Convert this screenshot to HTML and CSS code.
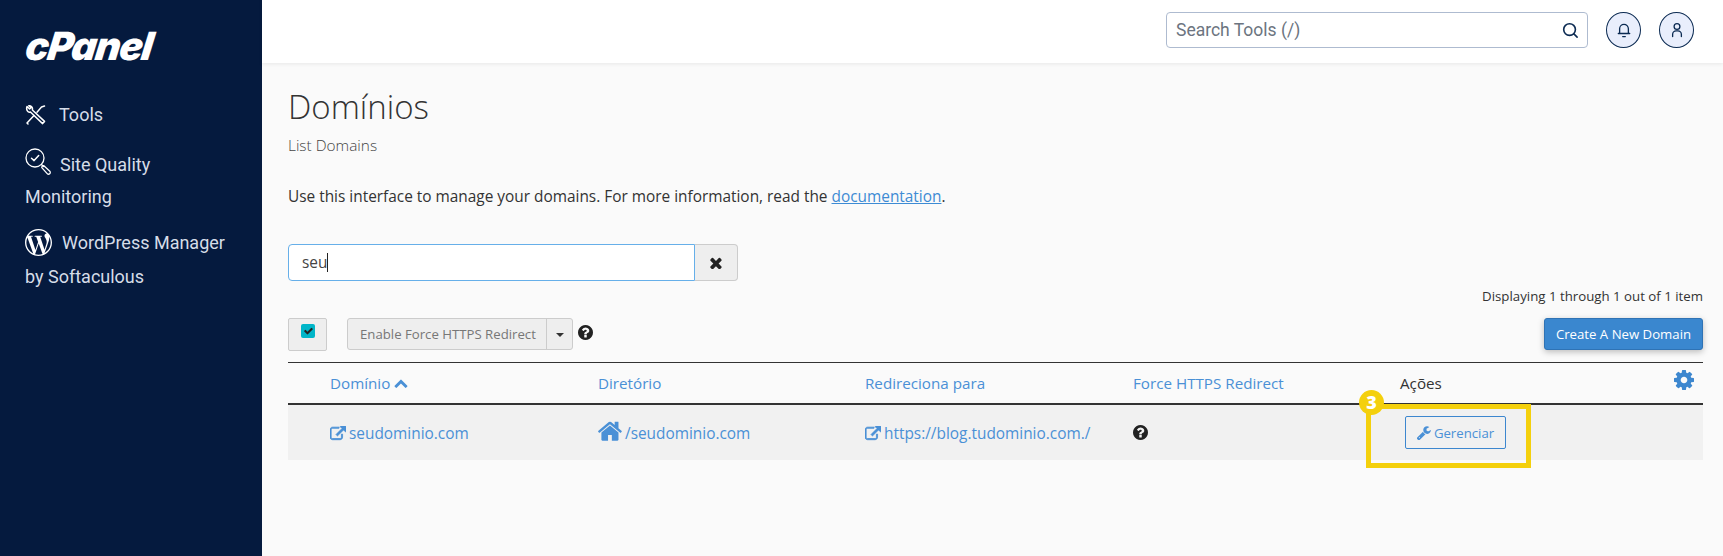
FILE: index.html
```html
<!DOCTYPE html>
<html lang="pt">
<head>
<meta charset="utf-8">
<title>Domínios</title>
<link rel="stylesheet" href="styles.css">
</head>
<body>
<svg class="defs" width="0" height="0" aria-hidden="true">
  <symbol id="i-q" viewBox="128 128 1536 1536"><path d="M1024 1376v-192q0-14-9-23t-23-9h-192q-14 0-23 9t-9 23v192q0 14 9 23t23 9h192q14 0 23-9t9-23zm256-672q0-88-55.5-163t-138.5-116-170-41q-243 0-371 213-15 24 8 42l132 100q7 6 19 6 16 0 25-12 53-68 86-92 34-24 86-24 48 0 85.5 26t37.5 59q0 38-20 61t-68 45q-63 28-115.5 86.5t-52.5 125.5v36q0 14 9 23t23 9h192q14 0 23-9t9-23q0-19 21.5-49.5t54.5-49.5q32-18 49-28.5t46-35 44.5-48 28-60.5 12.5-81zm384 192q0 209-103 385.5t-279.5 279.5-385.5 103-385.5-103-279.5-279.5-103-385.5 103-385.5 279.5-279.5 385.5-103 385.5 103 279.5 279.5 103 385.5z"/></symbol>
  <symbol id="i-x" viewBox="280 280 1240 1240"><path d="M1490 1322q0 40-28 68l-136 136q-28 28-68 28t-68-28l-294-294-294 294q-28 28-68 28t-68-28l-136-136q-28-28-28-68t28-68l294-294-294-294q-28-28-28-68t28-68l136-136q28-28 68-28t68 28l294 294 294-294q28-28 68-28t68 28l136 136q28 28 28 68t-28 68l-294 294 294 294q28 28 28 68z"/></symbol>
  <symbol id="i-ext" viewBox="0 0 1792 1792"><path d="M1408 928v320q0 119-84.5 203.5t-203.5 84.5h-832q-119 0-203.5-84.5t-84.5-203.5v-832q0-119 84.5-203.5t203.5-84.5h704q14 0 23 9t9 23v64q0 14-9 23t-23 9h-704q-66 0-113 47t-47 113v832q0 66 47 113t113 47h832q66 0 113-47t47-113v-320q0-14 9-23t23-9h64q14 0 23 9t9 23zm384-864v512q0 26-19 45t-45 19-45-19l-176-176-652 652q-10 10-23 10t-23-10l-114-114q-10-10-10-23t10-23l652-652-176-176q-19-19-19-45t19-45 45-19h512q26 0 45 19t19 45z"/></symbol>
  <symbol id="i-home" viewBox="90 230 1620 1310"><path d="M1472 992v480q0 26-19 45t-45 19h-384v-384h-256v384h-384q-26 0-45-19t-19-45v-480q0-1 .5-3t.5-3l575-474 575 474q1 2 1 6zm223-69l-62 74q-8 9-21 11h-3q-13 0-21-7l-692-577-692 577q-12 8-24 7-13-2-21-11l-62-74q-8-10-7-23.5t11-21.5l719-599q32-26 76-26t76 26l244 204v-195q0-14 9-23t23-9h192q14 0 23 9t9 23v408l219 182q10 8 11 21.5t-7 23.5z"/></symbol>
  <symbol id="i-cog" viewBox="128 128 1536 1536"><path d="M1152 896q0-106-75-181t-181-75-181 75-75 181 75 181 181 75 181-75 75-181zm512-109v222q0 12-8 23t-20 13l-185 28q-19 54-39 91 35 50 107 138 10 12 10 25t-9 23q-27 37-99 108t-94 71q-12 0-26-9l-138-108q-44 23-91 38-16 136-29 186-7 28-36 28h-222q-14 0-24.5-8.5t-11.5-21.5l-28-184q-49-16-90-37l-141 107q-10 9-25 9-14 0-25-11-126-114-165-168-7-10-7-23 0-12 8-23 15-21 51-66.5t54-70.5q-27-50-41-99l-183-27q-13-2-21-12.5t-8-23.5v-222q0-12 8-23t19-13l186-28q14-46 39-92-40-57-107-138-10-12-10-24 0-10 9-23 26-36 98.5-107.5t94.5-71.5q13 0 26 10l138 107q44-23 91-38 16-136 29-186 7-28 36-28h222q14 0 24.5 8.5t11.5 21.5l28 184q49 16 90 37l142-107q9-9 24-9 13 0 25 10 129 119 165 170 7 8 7 22 0 12-8 23-15 21-51 66.5t-54 70.5q26 50 41 98l183 28q13 2 21 12.5t8 23.5z"/></symbol>
  <symbol id="i-wrench" viewBox="100 100 1640 1640"><path d="M448 1472q0-26-19-45t-45-19-45 19-19 45 19 45 45 19 45-19 19-45zm644-420l-682 682q-37 37-90 37-52 0-91-37l-106-108q-38-36-38-90 0-53 38-91l681-681q39 98 114.5 173.5t173.5 114.5zm634-435q0 39-23 106-47 134-164.5 217.5t-258.5 83.5q-185 0-316.5-131.5t-131.5-316.5 131.5-316.5 316.5-131.5q58 0 121.5 16.5t107.5 46.5q16 11 16 28t-16 28l-293 169v224l193 107q5-3 79-48.5t135.5-81 70.5-35.5q15 0 23.5 10t8.5 25z"/></symbol>
  <symbol id="i-up" viewBox="90 290 1620 1240"><path d="M1683 1331l-166 165q-19 19-45 19t-45-19l-531-531-531 531q-19 19-45 19t-45-19l-166-165q-19-19-19-45.5t19-45.5l742-741q19-19 45-19t45 19l742 741q19 19 19 45.5t-19 45.5z"/></symbol>
  <symbol id="i-check" viewBox="100 290 1600 1230"><path d="M1671 566q0 40-28 68l-724 724-136 136q-28 28-68 28t-68-28l-136-136-362-362q-28-28-28-68t28-68l136-136q28-28 68-28t68 28l294 295 656-657q28-28 68-28t68 28l136 136q28 28 28 68z"/></symbol>
</svg>

<div class="app">
  <aside class="sidebar">
    <div class="logo">cPanel</div>
    <nav class="nav">
      <a class="nav-item nav-tools">
        <svg class="nav-icon tools-icon" viewBox="0 0 21 20" fill="none" stroke="#fff" stroke-width="1.5" stroke-linecap="round" stroke-linejoin="round">
          <path d="M19.5 1 L16.5 2 L12 7.2 M9 10.5 L2 18 L3 19"/>
          <path d="M2 1.5 L4.6 4 L6 2.8 L3.8 .8 C6 .3 8 2.5 7.4 5 L19.5 16.4 L17.6 18.6 L5.4 7 C3 7.8 .8 5 2 1.5 Z"/>
        </svg>Tools
      </a>
      <a class="nav-item nav-sq">
        <svg class="nav-icon sq-icon" viewBox="0 0 27 27" fill="none" stroke="#fff" stroke-width="1.3" stroke-linecap="round" stroke-linejoin="round">
          <circle cx="10" cy="10" r="9"/>
          <path d="M6.5 10.2 l2.6 2.4 4.6-5" stroke-width="1.5"/>
          <path d="M16.5 16.5 l2 2 M18.6 17.6 l6.2 5.6 a1.7 1.7 0 0 1-2.6 2.4 l-5.4-6 a1.8 1.8 0 0 1 1.8-2z"/>
        </svg>Site Quality Monitoring
      </a>
      <a class="nav-item nav-wp">
        <svg class="nav-icon wp-icon" viewBox="0 0 24 24" fill="#fff"><path d="M21.469 6.825c.84 1.537 1.318 3.3 1.318 5.175 0 3.979-2.156 7.456-5.363 9.325l3.295-9.527c.615-1.54.82-2.771.82-3.864 0-.405-.026-.78-.07-1.11m-7.981.105c.647-.03 1.232-.105 1.232-.105.582-.075.514-.93-.067-.899 0 0-1.755.135-2.88.135-1.064 0-2.85-.15-2.85-.15-.585-.03-.661.855-.075.885 0 0 .54.061 1.125.09l1.68 4.605-2.37 7.08L5.354 6.9c.649-.03 1.234-.1 1.234-.1.585-.075.516-.93-.065-.896 0 0-1.746.138-2.874.138-.2 0-.438-.008-.69-.015C4.911 3.15 8.235 1.215 12 1.215c2.809 0 5.365 1.072 7.286 2.833-.046-.003-.091-.009-.141-.009-1.06 0-1.812.923-1.812 1.914 0 .89.513 1.643 1.06 2.531.411.72.89 1.643.89 2.977 0 .915-.354 1.994-.821 3.479l-1.075 3.585-3.9-11.61.001.014zM12 22.784c-1.059 0-2.081-.153-3.048-.437l3.237-9.406 3.315 9.087c.024.053.05.101.078.149-1.12.393-2.325.609-3.582.609M1.211 12c0-1.564.336-3.05.935-4.39L7.29 21.709C3.694 19.96 1.212 16.271 1.211 12M12 0C5.385 0 0 5.385 0 12s5.385 12 12 12 12-5.385 12-12S18.615 0 12 0"/></svg>WordPress Manager by Softaculous
      </a>
    </nav>
  </aside>

  <div class="content">
    <header class="topbar">
      <div class="tool-search">
        <span class="tool-search-text">Search Tools (/)</span>
        <svg class="tool-search-icon" viewBox="0 0 18 18" fill="none" stroke="#0b2a52" stroke-width="1.7" stroke-linecap="round"><circle cx="8" cy="8" r="6.2"/><path d="M12.6 12.6 L16 16"/></svg>
      </div>
      <button class="round-btn bell-btn">
        <svg class="round-icon" viewBox="0 0 16 18" fill="none" stroke="#0b2a52" stroke-width="1.5" stroke-linecap="round" stroke-linejoin="round"><path d="M3 13 V7.5 a5 5 0 0 1 10 0 V13 M1.5 13 H14.5 M6.5 16.5 H9.5"/></svg>
      </button>
      <button class="round-btn">
        <svg class="round-icon" viewBox="0 0 16 18" fill="none" stroke="#0b2a52" stroke-width="1.5" stroke-linecap="round"><circle cx="8" cy="5" r="3.3"/><path d="M3 16.5 V14 a4 4 0 0 1 4-4 h2 a4 4 0 0 1 4 4 v2.5"/></svg>
      </button>
    </header>

    <main class="main">
      <h1 class="title">Domínios</h1>
      <p class="subtitle">List Domains</p>
      <p class="intro">Use this interface to manage your domains. For more information, read the <a class="doc-link">documentation</a>.</p>

      <div class="filter">
        <div class="filter-input">seu<span class="caret"></span></div>
        <button class="filter-clear"><svg class="ico ico-x"><use href="#i-x"/></svg></button>
      </div>

      <div class="pager">Displaying 1 through 1 out of 1 item</div>

      <div class="toolbar">
        <div class="check-box"><span class="check"><svg class="ico ico-check"><use href="#i-check"/></svg></span></div>
        <div class="split">
          <span class="split-main">Enable Force HTTPS Redirect</span>
          <span class="split-caret"><span class="caret-down"></span></span>
        </div>
        <svg class="ico ico-q toolbar-q"><use href="#i-q"/></svg>
        <button class="btn-create">Create A New Domain</button>
      </div>

      <div class="table">
        <div class="thead">
          <a class="th th-first">Domínio <svg class="ico ico-up"><use href="#i-up"/></svg></a>
          <a class="th">Diretório</a>
          <a class="th">Redireciona para</a>
          <a class="th">Force HTTPS Redirect</a>
          <div class="th th-actions">Ações<svg class="ico ico-cog"><use href="#i-cog"/></svg></div>
        </div>
        <div class="trow">
          <a class="td td-link td-first"><svg class="ico ico-ext"><use href="#i-ext"/></svg>seudominio.com</a>
          <a class="td td-link"><svg class="ico ico-home"><use href="#i-home"/></svg>/seudominio.com</a>
          <a class="td td-link"><svg class="ico ico-ext"><use href="#i-ext"/></svg>https://blog.tudominio.com./</a>
          <div class="td"><svg class="ico ico-q"><use href="#i-q"/></svg></div>
          <div class="td td-actions">
            <button class="btn-manage"><svg class="ico ico-wrench"><use href="#i-wrench"/></svg>Gerenciar</button>
            <span class="highlight"></span>
            <span class="badge">3</span>
          </div>
        </div>
      </div>
    </main>
  </div>
</div>
</body>
</html>
```

FILE: styles.css
```css
* { box-sizing: border-box; }
html, body { margin: 0; padding: 0; height: 100%; }
body { font-family: "Open Sans", sans-serif; background: #fafafa; color: #333; overflow: hidden; }
.defs { position: absolute; }
.app { display: flex; height: 556px; }

.sidebar { width: 262px; flex: none; background: #051a3e; color: #d6dde8; padding: 0 25px; font-family: Roboto, sans-serif; }
.logo { font-family: Inter, sans-serif; font-style: italic; font-weight: 900; font-size: 39px; line-height: 42px; letter-spacing: -1.3px; color: #fff; margin: 25px 0 0 -2px; transform: skewX(-8deg); transform-origin: left bottom; }
.nav { margin-top: 31px; display: flex; flex-direction: column; }
.nav-item { display: block; font-size: 18px; line-height: 33px; }
.nav-sq { margin-top: 18px; width: 190px; line-height: 32px; }
.nav-wp { margin-top: 13px; width: 210px; line-height: 34px; }
.nav-icon { display: inline-block; vertical-align: middle; }
.tools-icon { width: 21px; height: 20px; margin-right: 13px; margin-top: -2px; }
.sq-icon { width: 27px; height: 27px; margin-right: 8px; margin-top: -10px; }
.wp-icon { width: 27px; height: 27px; margin-right: 10px; margin-top: -3px; }

.content { flex: 1; min-width: 0; display: flex; flex-direction: column; }
.topbar { height: 63px; flex: none; background: #fff; box-shadow: 0 1px 4px rgba(0,0,0,.08); display: flex; align-items: flex-start; padding: 12px 29px 0 904px; font-family: Roboto, sans-serif; position: relative; }
.tool-search { width: 422px; height: 36px; border: 1px solid #aebbd0; border-radius: 4px; display: flex; align-items: center; justify-content: space-between; padding: 0 8px 0 9px; margin-right: 18px; }
.tool-search-text { font-size: 17.5px; color: #6c7480; }
.tool-search-icon { width: 17px; height: 17px; }
.round-btn { width: 35px; height: 36px; border-radius: 50%; border: 1px solid #0b2a52; background: #e9eefc; padding: 0; display: flex; align-items: center; justify-content: center; }
.bell-btn { margin-right: 18px; }
.round-icon { width: 14px; height: 16px; }

.main { padding: 0 20px 0 26px; }
.title { font-weight: 300; font-size: 33px; line-height: 40px; margin: 24px 0 0; color: #333; }
.subtitle { font-weight: 300; font-size: 15.4px; line-height: 20px; margin: 9px 0 0; color: #444; }
.intro { font-size: 15.4px; line-height: 20px; margin: 31px 0 0; color: #333; }
.doc-link { color: #3d8bd4; text-decoration: underline; }

.filter { display: flex; margin-top: 37px; height: 37px; width: 450px; }
.filter-input { width: 407px; height: 37px; background: #fff; border: 1px solid #66afe9; border-radius: 4px 0 0 4px; padding-left: 13px; font-size: 15.4px; line-height: 35px; color: #444; display: flex; align-items: center; }
.caret { display: inline-block; width: 1px; height: 19px; background: #222; }
.filter-clear { width: 43px; height: 37px; background: #eee; border: 1px solid #ccc; border-left: 0; border-radius: 0 4px 4px 0; padding: 0; display: flex; align-items: center; justify-content: center; }
.ico { fill: currentColor; display: inline-block; flex: none; }
.ico-x { width: 12px; height: 12px; color: #222; }

.pager { font-size: 13.25px; line-height: 18px; margin-top: 6px; text-align: right; color: #333; }

.toolbar { display: flex; align-items: flex-start; margin-top: 13px; height: 33px; }
.check-box { width: 39px; height: 33px; background: #eee; border: 1px solid #ccc; border-radius: 2px; padding: 5px 0 0 12px; }
.check { display: flex; width: 14px; height: 14px; background: #00b5c8; border-radius: 2px; align-items: center; justify-content: center; color: #222; }
.ico-check { width: 9px; height: 8px; }
.split { display: flex; height: 32px; margin-left: 20px; background: #eee; border: 1px solid #ccc; border-radius: 3px; font-size: 13.2px; color: #777; }
.split-main { display: flex; align-items: center; padding: 0 11px 0 12px; width: 199px; border-right: 1px solid #ccc; white-space: nowrap; }
.split-caret { display: flex; width: 25px; align-items: center; justify-content: center; }
.caret-down { width: 0; height: 0; border-left: 4px solid transparent; border-right: 4px solid transparent; border-top: 4px solid #333; margin-top: 2px; }
.ico-q { width: 15px; height: 15px; color: #222; }
.toolbar-q { margin: 7px 0 0 5px; }
.btn-create { margin-left: auto; width: 159px; height: 32px; background: #3a87cf; border: 1px solid #2f73b5; border-radius: 3px; color: #fff; font: 13.2px "Open Sans", sans-serif; padding: 0; box-shadow: 0 2px 6px rgba(0,0,0,.25); }

.table { margin-top: 11px; }
.thead, .trow { display: grid; grid-template-columns: 310px 267px 268px 267px 1fr; }
.thead { height: 43px; border-top: 1px solid #333; border-bottom: 2px solid #333; align-items: center; }
.th { font-size: 15.2px; color: #4a90d6; }
.th-first { padding-left: 42px; display: flex; align-items: center; gap: 4px; }
.ico-up { width: 14px; height: 10px; }
.th-actions { color: #333; display: flex; justify-content: space-between; align-items: center; padding-right: 9px; }
.ico-cog { width: 20px; height: 20px; color: #3d87cf; margin-top: -6px; }
.trow { height: 55px; background: #f1f1f1; align-items: center; }
.td { font-size: 15.4px; color: #4a90d6; display: flex; align-items: center; white-space: nowrap; }
.td-link { padding-top: 2px; }
.td-first { padding-left: 42px; }
.ico-ext { width: 16px; height: 16px; margin-right: 3px; stroke: currentColor; stroke-width: 90px; }
.ico-home { width: 24px; height: 20px; margin-right: 3px; margin-top: -6px; }
.td-actions { position: relative; padding-left: 5px; }
.btn-manage { width: 101px; height: 33px; background: transparent; border: 1px solid #3d87cf; border-radius: 2px; color: #4a90d6; font: 13.2px "Open Sans", sans-serif; padding: 0; display: flex; align-items: center; justify-content: center; gap: 3px; }
.ico-wrench { width: 14px; height: 14px; }
.highlight { position: absolute; left: -34px; top: -12px; width: 165px; height: 64px; border: 5px solid #f4d00c; }
.badge { position: absolute; left: -41px; top: -26px; width: 25px; height: 25px; border-radius: 50%; background: #f4d00c; color: #fff; font-weight: 800; font-size: 18px; line-height: 25px; text-align: center; }
```
